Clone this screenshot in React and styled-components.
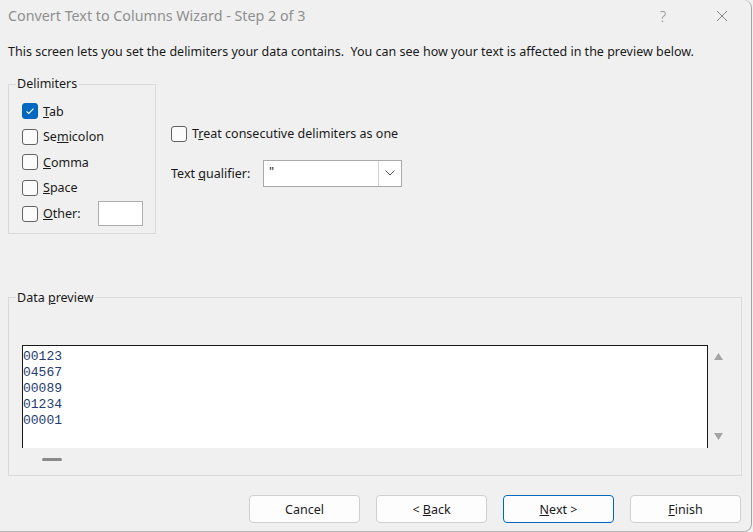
import React from "react";
import styled, { createGlobalStyle } from "styled-components";

const Global = createGlobalStyle`
  html, body { margin: 0; padding: 0; background: #f0f0f0; }
  #root { width: 753px; height: 532px; }
`;

const Window = styled.div`
  width: 752px;
  height: 532px;
  box-sizing: border-box;
  background: #f0f0f0;
  border-right: 1px solid #a4a4a4;
  border-bottom: 1px solid #b4b4b4;
  border-bottom-right-radius: 8px;
  border-top-right-radius: 8px;
  display: flex;
  flex-direction: column;
  font-family: "Noto Sans", "Open Sans", sans-serif;
  font-size: 12.5px;
  color: #1a1a1a;
`;

const TitleBar = styled.div`
  height: 31px;
  display: flex;
  align-items: center;
  padding: 0 6px 0 8px;
`;

const Title = styled.div`
  flex: 1;
  font-size: 14.3px;
  color: #8f8f8f;
  margin-top: -1px;
`;

const CaptionButton = styled.div`
  width: 46px;
  height: 31px;
  display: flex;
  align-items: center;
  justify-content: center;
  color: #8f8f8f;
  font-size: 15px;
  font-weight: 300;
  & + & { margin-left: 13px; }
`;

const Description = styled.div`
  margin: 13px 0 0 8px;
  line-height: 16px;
`;

const Middle = styled.div`
  display: flex;
  margin-top: 16px;
  padding-left: 8px;
`;

const Group = styled.fieldset`
  margin: 0;
  padding: 0;
  min-width: 0;
  border: 1px solid #dadada;
  box-sizing: border-box;
  width: ${(p) => p.$width}px;
`;

const Legend = styled.legend`
  margin-left: 7px;
  padding: 0 1px;
  line-height: 16px;
`;

const DelimBody = styled.div`
  padding: 6.5px 12px 6px 13px;
  display: flex;
  flex-direction: column;
`;

const Row = styled.label`
  display: flex;
  align-items: center;
  height: ${(p) => p.$h || 25.5}px;
`;

const Box = styled.span`
  width: 16px;
  height: 16px;
  box-sizing: border-box;
  border-radius: 3px;
  flex: none;
  display: flex;
  align-items: center;
  justify-content: center;
  margin-right: 5px;
  background: ${(p) => (p.$checked ? "#0067c0" : "#fbfbfb")};
  border: 1px solid ${(p) => (p.$checked ? "#0067c0" : "#626262")};
`;

const OtherInput = styled.div`
  margin-left: auto;
  width: 45px;
  height: 25px;
  box-sizing: border-box;
  background: #fff;
  border: 1px solid #adadad;
`;

const Options = styled.div`
  margin-left: 15px;
  padding-top: 45px;
  display: flex;
  flex-direction: column;
`;

const QualifierRow = styled.div`
  display: flex;
  align-items: center;
  margin-top: 13px;
`;

const QualifierLabel = styled.span`
  width: 92px;
`;

const Combo = styled.div`
  width: 139px;
  height: 27px;
  box-sizing: border-box;
  background: #fff;
  border: 1px solid #a9a9a9;
  display: flex;
`;

const ComboValue = styled.div`
  flex: 1;
  padding: 3px 0 0 5px;
  line-height: 16px;
`;

const ComboButton = styled.div`
  width: 22px;
  border-left: 1px solid #d4d4d4;
  display: flex;
  align-items: center;
  justify-content: center;
`;

const PreviewGroup = styled(Group)`
  margin: 56px 9px 0 8px;
`;

const PreviewBody = styled.div`
  padding: 39px 13px 4px 13px;
  display: flex;
  flex-direction: column;
`;

const Grid = styled.div`
  display: flex;
  height: 103px;
`;

const PreviewBox = styled.div`
  flex: 1;
  background: #fff;
  border: 1px solid #1a1a1a;
  border-bottom: none;
  padding: 3px 0 0 0;
  font-family: "Liberation Mono", monospace;
  font-size: 13px;
  line-height: 16px;
  color: #243b73;
`;

const VScroll = styled.div`
  width: 20px;
  display: flex;
  flex-direction: column;
  align-items: center;
  justify-content: space-between;
  padding: 8px 0 8px;
  box-sizing: border-box;
`;

const HScroll = styled.div`
  height: 23px;
  display: flex;
  align-items: center;
  padding-left: 20px;
`;

const Thumb = styled.div`
  width: 20px;
  height: 3px;
  border-radius: 2px;
  background: #8a8a8a;
`;

const Buttons = styled.div`
  display: flex;
  justify-content: flex-end;
  gap: 16px;
  margin-top: 19px;
  padding-right: 10px;
`;

const Button = styled.button`
  width: 111px;
  height: 28px;
  box-sizing: border-box;
  border-radius: 4px;
  background: #fdfdfd;
  border: 1px solid ${(p) => (p.$primary ? "#0067c0" : "#d0d0d0")};
  font-family: inherit;
  font-size: 12.5px;
  color: #1a1a1a;
  padding: 1px 0 0;
`;

const Check = ({ checked }) => (
  <Box $checked={checked}>
    {checked && (
      <svg width="12" height="12" viewBox="0 0 12 12">
        <path d="M2.5 6.3 L4.8 8.5 L9.5 3.6" fill="none" stroke="#fff" strokeWidth="1.1" />
      </svg>
    )}
  </Box>
);

const Tri = ({ down }) => (
  <svg width="9" height="7" viewBox="0 0 9 7">
    <path d={down ? "M0 0 H9 L4.5 7 Z" : "M0 7 H9 L4.5 0 Z"} fill="#a4a4a4" />
  </svg>
);

export default function App() {
  return (
    <>
      <Global />
      <Window>
        <TitleBar>
          <Title>Convert Text to Columns Wizard - Step 2 of 3</Title>
          <CaptionButton>?</CaptionButton>
          <CaptionButton>
            <svg width="12" height="12" viewBox="0 0 12 12">
              <path d="M1 1 L11 11 M11 1 L1 11" stroke="#8a8a8a" strokeWidth="1" />
            </svg>
          </CaptionButton>
        </TitleBar>
        <Description>
          This screen lets you set the delimiters your data contains.&nbsp; You can see how your text is affected in the preview below.
        </Description>
        <Middle>
          <Group $width={148}>
            <Legend>Delimiters</Legend>
            <DelimBody>
              <Row><Check checked /><span><u>T</u>ab</span></Row>
              <Row><Check /><span>Se<u>m</u>icolon</span></Row>
              <Row><Check /><span><u>C</u>omma</span></Row>
              <Row><Check /><span><u>S</u>pace</span></Row>
              <Row $h={26}><Check /><span><u>O</u>ther:</span><OtherInput /></Row>
            </DelimBody>
          </Group>
          <Options>
            <Row><Check /><span>T<u>r</u>eat consecutive delimiters as one</span></Row>
            <QualifierRow>
              <QualifierLabel>Text <u>q</u>ualifier:</QualifierLabel>
              <Combo>
                <ComboValue>"</ComboValue>
                <ComboButton>
                  <svg width="10" height="6" viewBox="0 0 10 6">
                    <path d="M0.5 0.5 L5 5 L9.5 0.5" fill="none" stroke="#5a5a5a" strokeWidth="1" />
                  </svg>
                </ComboButton>
              </Combo>
            </QualifierRow>
          </Options>
        </Middle>
        <PreviewGroup as="fieldset">
          <Legend>Data <u>p</u>review</Legend>
          <PreviewBody>
            <Grid>
              <PreviewBox>
                <div>00123</div>
                <div>04567</div>
                <div>00089</div>
                <div>01234</div>
                <div>00001</div>
              </PreviewBox>
              <VScroll>
                <Tri />
                <Tri down />
              </VScroll>
            </Grid>
            <HScroll><Thumb /></HScroll>
          </PreviewBody>
        </PreviewGroup>
        <Buttons>
          <Button>Cancel</Button>
          <Button>&lt; <u>B</u>ack</Button>
          <Button $primary><u>N</u>ext &gt;</Button>
          <Button><u>F</u>inish</Button>
        </Buttons>
      </Window>
    </>
  );
}
